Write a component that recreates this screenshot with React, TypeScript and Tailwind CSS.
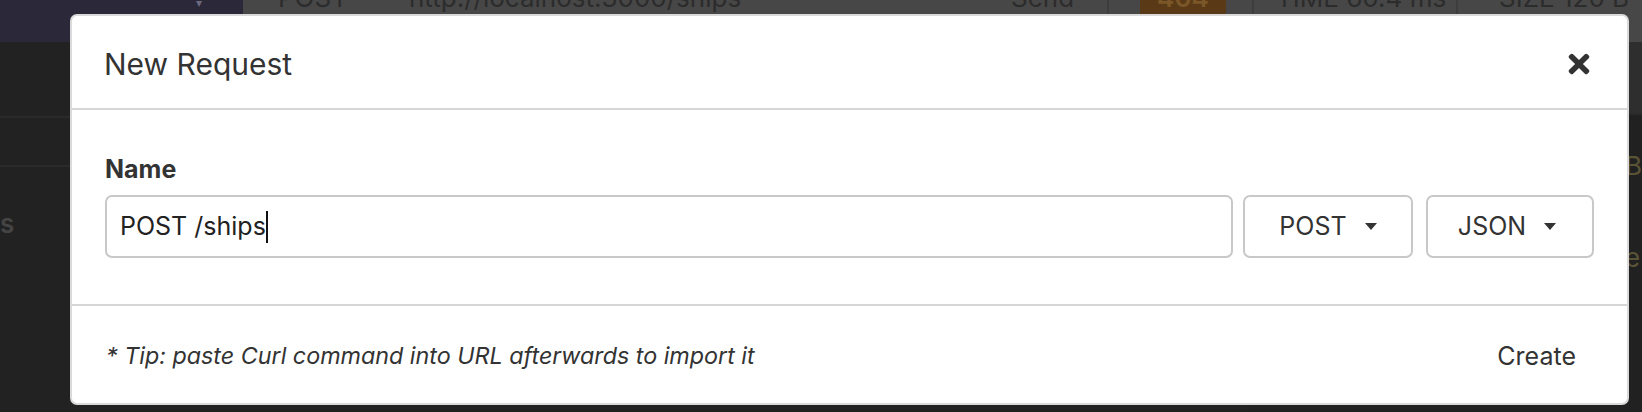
import { FaTimes } from 'react-icons/fa';

function Caret() {
  return <span className="ml-[18px] inline-block h-0 w-0 border-x-[6px] border-t-[7px] border-x-transparent border-t-[#333]" />;
}

function Background() {
  return (
    <div className="flex h-full flex-col">
      <div className="flex h-[42px]">
        <div className="relative w-[243px] bg-[#2b2839]">
          <span className="absolute left-[196px] top-[-6px] text-[12px] text-[#6b6880]">▾</span>
        </div>
        <div className="flex flex-1 items-start whitespace-nowrap bg-[#474747] text-[26px] leading-[30px] text-[#2c2c2c]">
          <span className="ml-[35px] mt-[-17px] w-[131px]">POST</span>
          <span className="mt-[-17px] w-[602px]">http://localhost:3000/ships</span>
          <span className="mt-[-17px] w-[96px]">Send</span>
          <div className="h-full w-[2px] bg-[#3d3d3d]" />
          <div className="ml-[31px] flex h-full w-[86px] justify-center bg-[#5a3a16]">
            <span className="mt-[-17px] font-semibold text-[#7a5628]">404</span>
          </div>
          <div className="ml-[26px] h-full w-[2px] bg-[#3d3d3d]" />
          <span className="ml-[22px] mt-[-17px] w-[180px]">TIME 60.4 ms</span>
          <div className="h-full w-[2px] bg-[#3d3d3d]" />
          <span className="ml-[41px] mt-[-17px]">SIZE 120 B</span>
        </div>
      </div>
      <div className="flex flex-1">
        <div className="w-[243px] bg-[#222]">
          <div className="h-[76px] border-b-2 border-[#2a2a2a]" />
          <div className="h-[49px] border-b-2 border-[#2a2a2a]" />
          <div className="mt-[42px] text-[26px] font-semibold leading-[30px] text-[#444]">s</div>
        </div>
        <div className="w-[1009px] bg-[#222]" />
        <div className="flex-1 bg-[#212121]">
          <div className="h-[73px] border-b-2 border-[#2a2a2a] bg-[#2e2e2e]" />
          <div className="pl-[376px] text-[26px] leading-[30px] text-[#5a5436]">
            <div className="mt-[36px]">B</div>
            <div className="mt-[62px]">e</div>
          </div>
        </div>
      </div>
    </div>
  );
}

export default function App() {
  return (
    <div className="relative h-[412px] w-[1642px] overflow-hidden bg-[#222]" style={{ fontFamily: 'Inter, "Liberation Sans", sans-serif' }}>
      <Background />
      <div className="absolute left-[70px] top-[14px] flex h-[391px] w-[1559px] flex-col rounded-[7px] border-2 border-[#dadada] bg-white text-[#333]">
        <div className="flex h-[94px] items-center justify-between border-b-2 border-[#d6d6d6] pl-[32px] pr-[33px] pt-[3px]">
          <h1 className="text-[30px] font-normal leading-none">New Request</h1>
          <FaTimes size={30} className="text-[#333]" />
        </div>
        <div className="px-[33px] pb-[46px] pt-[44px]">
          <label className="mb-[11px] block text-[25px] font-bold leading-[30px]">Name</label>
          <div className="flex">
            <div className="flex h-[63px] flex-1 items-center rounded-[7px] border-2 border-[#c8c8c8] pl-[13px] text-[25px] text-[#222]">
              <span>POST /ships</span>
              <span className="inline-block h-[32px] w-[2px] bg-[#111]" />
            </div>
            <button className="ml-[10px] flex h-[63px] w-[170px] items-center justify-center rounded-[7px] border-2 border-[#c8c8c8] text-[25px]">
              POST
              <Caret />
            </button>
            <button className="ml-[13px] flex h-[63px] w-[168px] items-center justify-center rounded-[7px] border-2 border-[#c8c8c8] pr-[6px] text-[25px]">
              JSON
              <Caret />
            </button>
          </div>
        </div>
        <div className="flex flex-1 items-center justify-between border-t-2 border-[#d6d6d6] pl-[34px] pr-[51px] pt-[4px]">
          <p className="text-[23.3px] italic">* Tip: paste Curl command into URL afterwards to import it</p>
          <button className="text-[25px]">Create</button>
        </div>
      </div>
    </div>
  );
}
